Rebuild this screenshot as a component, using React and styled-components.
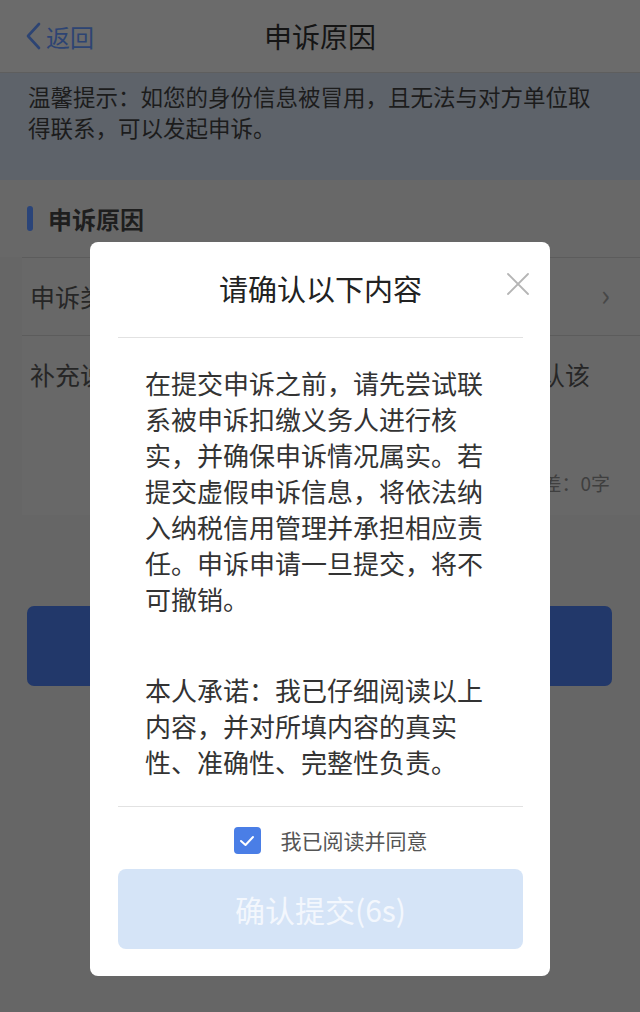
import React from 'react';
import styled, { createGlobalStyle } from 'styled-components';

const GlobalStyle = createGlobalStyle`
  html, body {
    margin: 0;
    padding: 0;
    background: #666666;
    font-family: "Noto Sans CJK SC", "Noto Sans", sans-serif;
  }
  * { box-sizing: border-box; }
`;

const Page = styled.div`
  width: 640px;
  height: 1012px;
  background: #666666;
  overflow: hidden;
  display: flex;
  flex-direction: column;
`;

const NavBar = styled.div`
  height: 73px;
  display: flex;
  align-items: center;
  justify-content: center;
  position: relative;
  background: #6b6b6b;
  border-bottom: 1px solid #5e5e5e;
`;

const BackLink = styled.div`
  position: absolute;
  left: 24px;
  top: 0;
  bottom: 0;
  display: flex;
  align-items: center;
  gap: 4px;
  color: #2d4473;
  font-size: 24px;
`;

const NavTitle = styled.div`
  font-size: 28px;
  color: #151515;
`;

const Notice = styled.div`
  height: 107px;
  padding: 8px 28px 0;
  background: #5e636a;
  color: #1c1c1c;
  font-size: 22.5px;
  line-height: 31px;
`;

const SectionHead = styled.div`
  height: 77px;
  display: flex;
  align-items: center;
  gap: 15px;
  padding-left: 27px;
  font-size: 24px;
  font-weight: 700;
  color: #1e1e1e;
  background: #686868;

  &::before {
    content: '';
    width: 6px;
    height: 25px;
    border-radius: 3px;
    background: #2a4479;
  }
`;

const Row = styled.div`
  margin-left: 22px;
  padding: 0 8px;
  height: ${(p) => p.$h}px;
  border-top: 1px solid #5c5c5c;
  display: flex;
  flex-direction: column;
  background: #686868;
`;

const RowLine = styled.div`
  height: 76px;
  display: flex;
  align-items: center;
  justify-content: space-between;
  font-size: 25px;
  color: #262626;
`;

const Chevron = styled.span`
  color: #474747;
  font-size: 30px;
  line-height: 30px;
  margin-right: 22px;
  margin-top: -6px;
`;

const Hint = styled.span`
  margin-right: 42px;
`;

const Count = styled.div`
  margin-top: 57px;
  align-self: flex-end;
  margin-right: 22px;
  font-size: 19px;
  color: #3f3f3f;
`;

const Gap = styled.div`
  height: 91px;
`;

const SubmitBar = styled.div`
  margin: 0 28px 0 27px;
  height: 80px;
  border-radius: 7px;
  background: #22386a;
`;

const Overlay = styled.div`
  position: fixed;
  inset: 0;
  display: flex;
  justify-content: center;
  align-items: flex-start;
  padding-top: 242px;
`;

const Modal = styled.div`
  width: 460px;
  background: #ffffff;
  border-radius: 8px;
  padding: 28px 27px 27px 28px;
  position: relative;
  display: flex;
  flex-direction: column;
`;

const ModalTitle = styled.div`
  text-align: center;
  font-size: 29px;
  line-height: 36px;
  color: #222222;
  padding-bottom: 31px;
  border-bottom: 1px solid #e2e2e2;
`;

const CloseBtn = styled.div`
  position: absolute;
  top: 30px;
  right: 20px;
  width: 24px;
  height: 24px;
  display: flex;
  align-items: center;
  justify-content: center;
`;

const Body = styled.div`
  padding: 27px 27px 26px;
  border-bottom: 1px solid #e2e2e2;
  display: flex;
  flex-direction: column;
  gap: 55px;
`;

const Para = styled.p`
  margin: 0;
  font-size: 26px;
  line-height: 36px;
  color: #333333;
`;

const AgreeRow = styled.label`
  display: flex;
  align-items: center;
  justify-content: center;
  gap: 20px;
  margin-top: 20px;
  margin-left: 20px;
  height: 27px;
  line-height: 27px;
  font-size: 21px;
  color: #555555;
`;

const Check = styled.span`
  width: 27px;
  height: 27px;
  border-radius: 4px;
  background: #4a7ee6;
  display: flex;
  align-items: center;
  justify-content: center;
`;

const ConfirmBtn = styled.button`
  margin-top: 15px;
  height: 80px;
  border: none;
  border-radius: 8px;
  background: #d5e4f7;
  color: #f3f7fd;
  font-family: inherit;
  font-size: 30px;
`;

export default function App() {
  return (
    <>
      <GlobalStyle />
      <Page>
        <NavBar>
          <BackLink>
            <svg width="18" height="28" viewBox="0 0 18 28">
              <path d="M15 2 L4 14 L15 26" fill="none" stroke="#2d4473" strokeWidth="2.6" strokeLinecap="round" strokeLinejoin="round" />
            </svg>
            返回
          </BackLink>
          <NavTitle>申诉原因</NavTitle>
        </NavBar>
        <Notice>温馨提示：如您的身份信息被冒用，且无法与对方单位取得联系，可以发起申诉。</Notice>
        <SectionHead>申诉原因</SectionHead>
        <Row $h={78}>
          <RowLine>
            <span>申诉类型</span>
            <Chevron>›</Chevron>
          </RowLine>
        </Row>
        <Row $h={180}>
          <RowLine>
            <span>补充说明</span>
            <Hint>请确认该</Hint>
          </RowLine>
          <Count>还差：0字</Count>
        </Row>
        <Gap />
        <SubmitBar />
      </Page>
      <Overlay>
        <Modal>
          <ModalTitle>请确认以下内容</ModalTitle>
          <CloseBtn>
            <svg width="24" height="24" viewBox="0 0 24 24">
              <path d="M2 2 L22 22 M22 2 L2 22" stroke="#b5b5b5" strokeWidth="1.8" strokeLinecap="round" />
            </svg>
          </CloseBtn>
          <Body>
            <Para>在提交申诉之前，请先尝试联系被申诉扣缴义务人进行核实，并确保申诉情况属实。若提交虚假申诉信息，将依法纳入纳税信用管理并承担相应责任。申诉申请一旦提交，将不可撤销。</Para>
            <Para>本人承诺：我已仔细阅读以上内容，并对所填内容的真实性、准确性、完整性负责。</Para>
          </Body>
          <AgreeRow>
            <Check>
              <svg width="16" height="12" viewBox="0 0 16 12">
                <path d="M2 6 L6.5 10 L14 2" fill="none" stroke="#ffffff" strokeWidth="2" strokeLinecap="round" strokeLinejoin="round" />
              </svg>
            </Check>
            我已阅读并同意
          </AgreeRow>
          <ConfirmBtn>确认提交(6s)</ConfirmBtn>
        </Modal>
      </Overlay>
    </>
  );
}
